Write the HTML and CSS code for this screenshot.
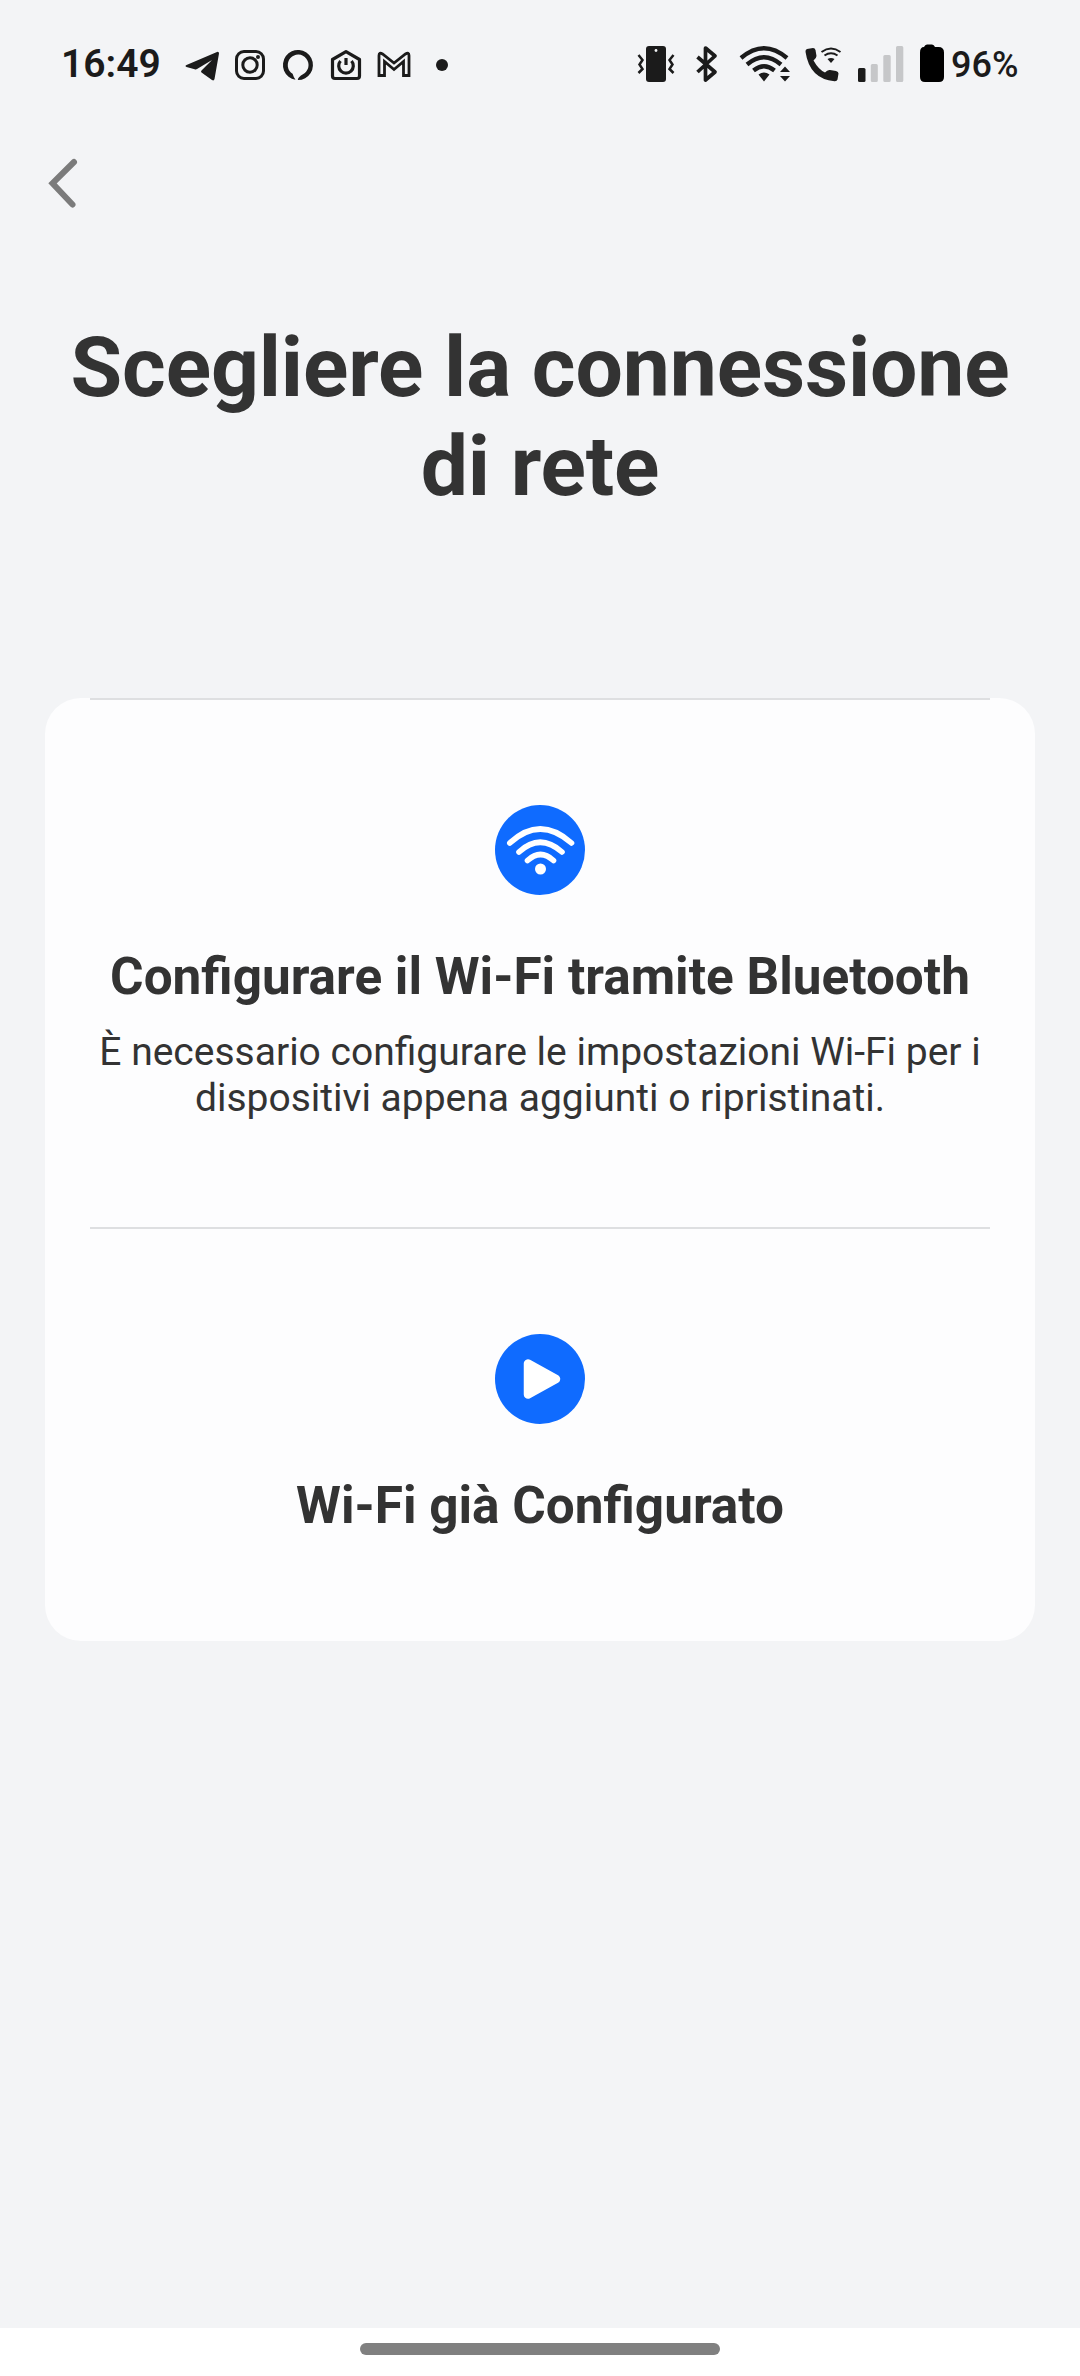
FILE: index.html
```html
<!DOCTYPE html>
<html lang="it">
<head>
<meta charset="utf-8">
<title>Scegliere la connessione di rete</title>
<link rel="stylesheet" href="styles.css">
</head>
<body>
<div class="screen">
  <header class="status">
    <span class="clock">16:49</span>
    <svg class="notifications" width="275" height="70" viewBox="0 0 275 70" fill="none" stroke="#1b1b1b" stroke-width="3">
      <path d="M6.500 35 37 22q2-.7 2 1.500L34.500 49q-.6 2.200-2.500 1L21.500 42.500q-1-1 0-2L32 30 17 39q-1 .8-2.300.2L6.500 37q-2-1 0-2z" fill="#1b1b1b" stroke="none"/>
      <rect x="56.500" y="21.500" width="27" height="27" rx="7.500"/>
      <circle cx="70" cy="35" r="7.200"/>
      <circle cx="78" cy="27" r="2" fill="#1b1b1b" stroke="none"/>
      <path d="M115.500 49.800A15 15 0 1 1 117.800 50C118 47.500 120 46 123 44.200A10.400 10.400 0 1 0 112.600 43.800Q113.500 47 115.500 49.800z" fill="#1b1b1b" stroke="none"/>
      <path d="M152.500 29.500 166 21.700l13.500 7.800V46q0 2.500-2.500 2.500H155q-2.500 0-2.500-2.500zM166 28v7M160.500 31a7.300 7.300 0 1 0 11 0" stroke-linejoin="round" stroke-width="3.200"/>
      <path d="M199 45.500V25.500q0-3.800 3.500-1.500L214 33l11.500-9q3.500-2.300 3.500 1.500v20h-5.500v-14L214 39.500 204.500 31.500v14z" stroke-width="2.800"/>
      <circle cx="262" cy="35" r="6" fill="#1b1b1b" stroke="none"/>
    </svg>
    <svg class="system" width="314" height="70" viewBox="0 0 314 70" fill="none" stroke="#1b1b1b" stroke-width="3">
      <rect x="16" y="16" width="20" height="36" rx="3" fill="#1b1b1b" stroke="none"/>
      <circle cx="26" cy="20.500" r="1.400" fill="#f3f4f6" stroke="none"/>
      <path d="m8.500 25 4 5-3 4.500 3 4.500-4 4M43.500 25l-4 5 3 4.500-3 4.500 4 4" stroke-width="2.500"/>
      <path d="m67.500 27 17.500 15-9.500 8V18l9.500 8-17.500 16" stroke-width="3.700" stroke-linejoin="round"/>
      <path d="M111 28q23-19.500 46 0M117 34.500q17-14.500 34 0M123.500 40.500q10.500-8.500 21 0" stroke-width="4.300"/>
      <path d="M128.500 44.500q5.500-4 11 0L134 51.500zM150 42l5-5.500 5 5.500zM150 46h10l-5 5.500z" fill="#1b1b1b" stroke="none"/>
      <path d="m177 19 6-1q2 0 2.500 2l1 6q0 2-3 4.500 5 9 11.500 12 2.500-3 5-2.500l6 1q2.500.5 2.500 2.500l-1 6q-.5 2-3 1.800-25-2.300-29-29.500-.2-2.200 1.500-2.800z" fill="#1b1b1b" stroke="none"/>
      <path d="M191.500 22q9.500-7 19 0M194.500 25.500q6.500-4.500 13 0" stroke-width="2"/>
      <path d="m197.500 29q3.500-2 7 0L201 33z" fill="#1b1b1b" stroke="none"/>
      <rect x="228" y="38" width="7.500" height="14" rx="1.500" fill="#1b1b1b" stroke="none"/>
      <path d="M242.300 34h4a1.500 1.500 0 0 1 1.500 1.500v15a1.500 1.500 0 0 1-1.500 1.500h-4a1.500 1.500 0 0 1-1.500-1.500v-15a1.500 1.500 0 0 1 1.500-1.500zM254.800 25h4.400a1.500 1.500 0 0 1 1.500 1.500v24a1.500 1.500 0 0 1-1.500 1.500h-4.400a1.500 1.500 0 0 1-1.500-1.500v-24a1.500 1.500 0 0 1 1.500-1.500zM267.500 16h4.300a1.500 1.500 0 0 1 1.500 1.500v33a1.500 1.500 0 0 1-1.500 1.500h-4.300a1.500 1.500 0 0 1-1.500-1.500v-33a1.500 1.500 0 0 1 1.500-1.500z" fill="#c6c7c9" stroke="none"/>
      <path d="M294 17q1-2.500 3-2.500h5q2 0 3 2.500h3.500q5.500 0 5.500 5.500V47q0 5-5 5H295q-5 0-5-5V22.500q0-5.500 4-5.500z" fill="#000" stroke="none"/>
    </svg>
    <span class="percent">96%</span>
  </header>
  <nav class="nav">
    <svg width="100" height="90" viewBox="0 0 100 90" fill="none" stroke="#7b7b7b" stroke-width="6" stroke-linecap="round"><path d="M44 22 22.500 43.300 42.500 64.500"/></svg>
  </nav>
  <main class="content">
    <h1 class="title">Scegliere la connessione di rete</h1>
    <section class="card">
      <article class="option">
        <svg class="badge" viewBox="0 0 90 90"><circle cx="45" cy="45" r="45" fill="#0f6bff"/><g fill="none" stroke="#fff" stroke-width="5.600" stroke-linecap="round"><path d="M14.800 38Q45 10 76.500 38M24 47Q45 27.500 67 47M32.500 55.500Q45.500 43.500 58.500 55.500"/></g><circle cx="45.500" cy="64" r="5.500" fill="#fff"/></svg>
        <h2 class="label">Configurare il Wi-Fi tramite Bluetooth</h2>
        <p class="note">È necessario configurare le impostazioni Wi-Fi per i dispositivi appena aggiunti o ripristinati.</p>
      </article>
      <article class="option">
        <svg class="badge" viewBox="0 0 90 90"><circle cx="45" cy="45" r="45" fill="#0f6bff"/><path d="M33 29.500v31L61 45z" fill="#fff" stroke="#fff" stroke-width="8.500" stroke-linejoin="round"/></svg>
        <h2 class="label">Wi-Fi già Configurato</h2>
      </article>
    </section>
  </main>
  <footer class="gesture"><div class="handle"></div></footer>
</div>
</body>
</html>
```
FILE: styles.css
```css
* { box-sizing: border-box; }
body { margin: 0; background: #f3f4f6; color: #333; font-family: Roboto, sans-serif; }
h1, h2, p { margin: 0; }
svg { display: block; }
.screen { display: flex; flex-direction: column; height: 2376px; }
.status { display: flex; height: 140px; padding-top: 30px; color: #1b1b1b; }
.clock { width: 119px; margin-left: 61px; font-size: 39px; font-weight: 600; line-height: 68px; }
.system { margin-left: 175px; }
.notifications, .system, .percent { flex: none; }
.percent { margin-left: 7px; font-size: 36px; font-weight: 500; line-height: 70px; }
.nav { height: 90px; padding-left: 30px; }
.content { flex: 1; padding: 88px 45px 0; }
.title { height: 291px; padding: 0 20px; margin-bottom: 89px; font-size: 84px; font-weight: 700; line-height: 99px; letter-spacing: -0.12px; text-align: center; }
.card { padding: 0 45px; height: 943px; border-radius: 36px; background: #fdfdfe; }
.option { height: 529px; padding-top: 105px; border-top: 2px solid #dedfe1; text-align: center; }
.badge { width: 90px; height: 90px; margin: 0 auto 52px; }
.label { font-size: 51.3px; font-weight: 700; line-height: 60px; white-space: nowrap; }
.note { margin-top: 22px; font-size: 39px; line-height: 46px; }
.gesture { height: 48px; padding-top: 15px; background: #fff; }
.handle { width: 360px; height: 12px; margin: 0 auto; border-radius: 6px; background: #808080; }
```
